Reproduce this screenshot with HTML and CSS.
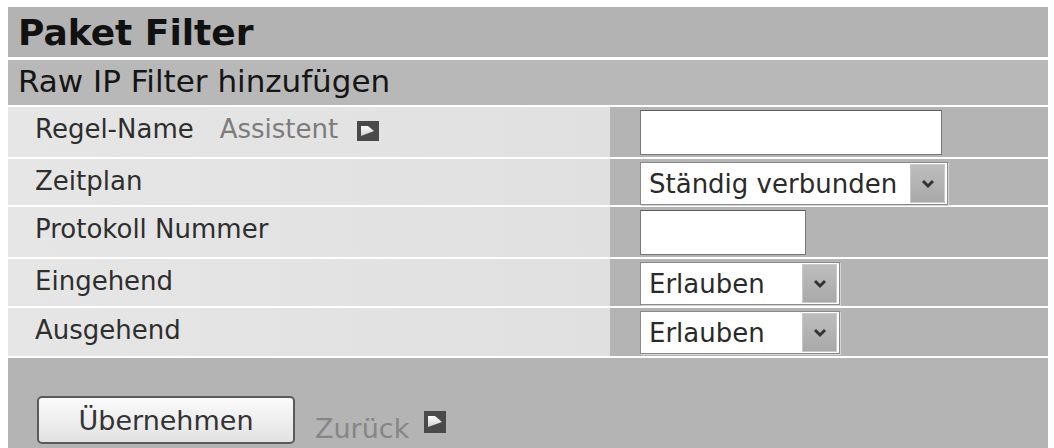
FILE: index.html
```html
<!DOCTYPE html>
<html lang="de">
<head>
<meta charset="utf-8">
<title>Paket Filter</title>
<link rel="stylesheet" href="styles.css">
</head>
<body>
<div class="page">
  <div class="title">Paket Filter</div>
  <div class="subtitle">Raw IP Filter hinzufügen</div>
  <div class="form">
    <div class="row h50">
      <div class="label">
        <span>Regel-Name</span>
        <span class="assist">Assistent</span>
        <svg class="goicon" width="22" height="20" viewBox="0 0 22 20"><defs><linearGradient id="g1" x1="0" y1="0" x2="0" y2="1"><stop offset="0" stop-color="#ffffff"/><stop offset="1" stop-color="#cfcfcf"/></linearGradient></defs><rect width="22" height="20" fill="#4a4a4a"/><polygon points="4,5 11,5 17,10 4,15" fill="url(#g1)"/></svg>
      </div>
      <div class="field"><input class="text wide" type="text"></div>
    </div>
    <div class="row h46">
      <div class="label">Zeitplan</div>
      <div class="field">
        <div class="select sel-wide"><span class="val">Ständig verbunden</span><span class="btn"><svg width="14" height="10" viewBox="0 0 14 10"><polyline points="2,2 7,7 12,2" fill="none" stroke="#333" stroke-width="3"/></svg></span></div>
      </div>
    </div>
    <div class="row h50">
      <div class="label">Protokoll Nummer</div>
      <div class="field"><input class="text narrow" type="text"></div>
    </div>
    <div class="row h47">
      <div class="label">Eingehend</div>
      <div class="field">
        <div class="select sel-short"><span class="val">Erlauben</span><span class="btn"><svg width="14" height="10" viewBox="0 0 14 10"><polyline points="2,2 7,7 12,2" fill="none" stroke="#333" stroke-width="3"/></svg></span></div>
      </div>
    </div>
    <div class="row h48">
      <div class="label">Ausgehend</div>
      <div class="field">
        <div class="select sel-short"><span class="val">Erlauben</span><span class="btn"><svg width="14" height="10" viewBox="0 0 14 10"><polyline points="2,2 7,7 12,2" fill="none" stroke="#333" stroke-width="3"/></svg></span></div>
      </div>
    </div>
  </div>
  <div class="footer">
    <button class="apply" type="button">Übernehmen</button>
    <div class="back">
      <span class="backtext">Zurück</span>
      <svg class="goicon" width="22" height="22" viewBox="0 0 22 22"><defs><linearGradient id="g2" x1="0" y1="0" x2="0" y2="1"><stop offset="0" stop-color="#ffffff"/><stop offset="1" stop-color="#cfcfcf"/></linearGradient></defs><rect width="22" height="22" fill="#4a4a4a"/><polygon points="4,5 11,5 18,11 4,16" fill="url(#g2)"/></svg>
    </div>
  </div>
</div>
</body>
</html>
```

FILE: styles.css
```css
html, body {
  background: #ffffff;
}
body {
  margin: 7px 6px 0 8px;
  font-family: "DejaVu Sans", "Liberation Sans", sans-serif;
  overflow: hidden;
}
.page {
  display: flex;
  flex-direction: column;
}
.title {
  height: 50px;
  box-sizing: border-box;
  padding: 5px 0 0 10px;
  background: #b3b3b3;
  color: #111;
  font-weight: bold;
  font-size: 36px;
  line-height: 1.164;
}
.subtitle {
  margin-top: 3px;
  height: 45px;
  box-sizing: border-box;
  padding: 3px 0 0 10px;
  background: #b8b8b8;
  color: #151515;
  font-size: 31px;
  line-height: 1.164;
}
.form {
  display: flex;
  flex-direction: column;
  gap: 2px;
  margin-top: 2px;
}
.row {
  display: flex;
}
.h50 { height: 50px; }
.h46 { height: 46px; }
.h47 { height: 47px; }
.h48 { height: 48px; }
.label {
  width: 602px;
  box-sizing: border-box;
  padding: 7px 0 0 27px;
  background: linear-gradient(90deg, #e6e6e6, #e0e0e0);
  color: #2e2e2e;
  font-size: 26px;
  line-height: 1.164;
  display: flex;
  align-items: flex-start;
}
.assist {
  margin-left: 26px;
  color: #7c7c7c;
}
.label .goicon {
  margin: 7px 0 0 19px;
}
.field {
  flex: 1;
  background: #b4b4b4;
  box-sizing: border-box;
  padding: 3px 0 0 30px;
}
.text {
  display: block;
  box-sizing: border-box;
  height: 45px;
  margin: 0;
  padding: 0 6px;
  border: 1px solid #777;
  border-top-color: #5e5e5e;
  background: #fff;
  font: 26px "DejaVu Sans", sans-serif;
  outline: none;
}
.wide { width: 302px; }
.narrow { width: 166px; }
.select {
  display: flex;
  align-items: stretch;
  box-sizing: border-box;
  height: 43px;
  border: 1px solid #8a8a8a;
  box-shadow: 1px 1px 0 #d6d6d6;
  background: #fff;
  padding: 1px 2px 1px 0;
}
.sel-wide { width: 308px; }
.sel-short { width: 200px; }
.val {
  flex: 1;
  padding-left: 8px;
  display: flex;
  align-items: center;
  color: #2a2a2a;
  font-size: 26px;
  line-height: 1;
}
.btn {
  width: 35px;
  display: flex;
  align-items: center;
  justify-content: center;
  box-sizing: border-box;
  border: 1px solid #c8c8c8;
  background: linear-gradient(180deg, #bdbdbd, #a9a9a9);
}
.footer {
  margin-top: 2px;
  height: 90px;
  box-sizing: border-box;
  padding: 38px 0 0 29px;
  background: #b4b4b4;
  display: flex;
  align-items: flex-start;
}
.apply {
  width: 258px;
  height: 48px;
  margin: 0;
  padding: 0;
  border: 2px solid #5a5a5a;
  border-radius: 5px;
  background: linear-gradient(180deg, #fbfbfb, #e2e2e2);
  color: #333;
  font: 27px "DejaVu Sans", sans-serif;
  line-height: 1;
}
.back {
  margin: 15px 0 0 20px;
  display: flex;
  align-items: flex-start;
  gap: 15px;
}
.backtext {
  padding-top: 2px;
  color: #868686;
  font-size: 27px;
  line-height: 1.164;
}
```
